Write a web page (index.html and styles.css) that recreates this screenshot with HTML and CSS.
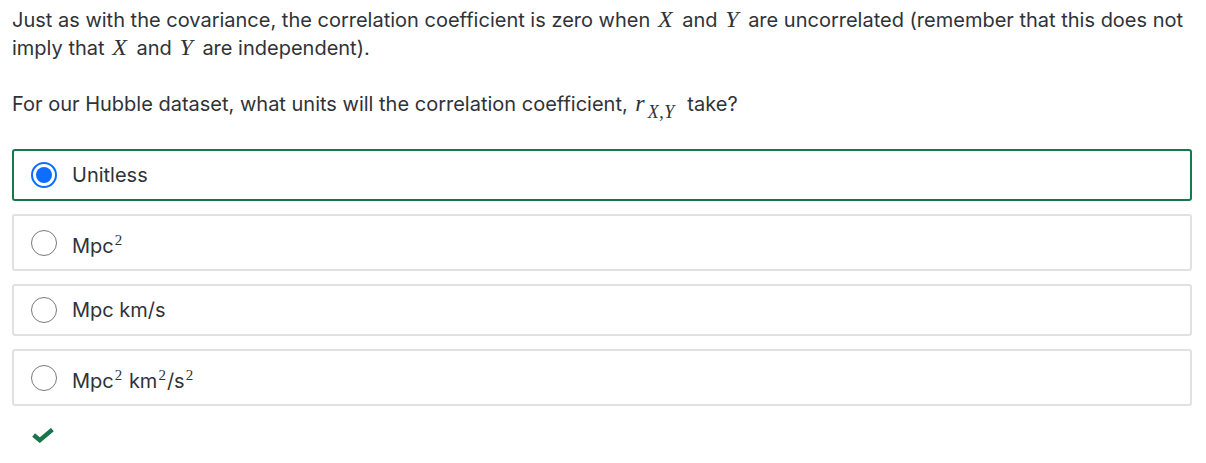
FILE: index.html
```html
<!DOCTYPE html>
<html>
<head>
<meta charset="utf-8">
<link rel="stylesheet" href="styles.css">
</head>
<body>
<div class="page">
  <p class="para">Just as with the covariance, the correlation coefficient is zero when <span class="m">X</span> and <span class="m">Y</span> are uncorrelated (remember that this does not imply that <span class="m">X</span> and <span class="m">Y</span> are independent).</p>
  <p class="para q">For our Hubble dataset, what units will the correlation coefficient, <span class="m">r</span><sub class="msub"><span class="mi">X</span><span class="comma">,</span><span class="mi">Y</span></sub> take?</p>
  <div class="options">
    <label class="opt selected"><span class="radio on"></span><span class="lbl">Unitless</span></label>
    <label class="opt"><span class="radio"></span><span class="lbl">Mpc<sup class="s">2</sup></span></label>
    <label class="opt"><span class="radio"></span><span class="lbl">Mpc km/s</span></label>
    <label class="opt"><span class="radio"></span><span class="lbl">Mpc<sup class="s">2</sup> km<sup class="s">2</sup>/s<sup class="s">2</sup></span></label>
  </div>
  <div class="result">
    <svg class="check" width="22" height="15" viewBox="0 0 22 15"><path d="M1.6 7 L7.8 12.2 L20.4 1.6" fill="none" stroke="#18774a" stroke-width="4.4" stroke-linejoin="miter"/></svg>
  </div>
</div>
</body>
</html>
```
FILE: styles.css
```css
html, body { margin: 0; padding: 0; background: #fff; }
body {
  font-family: Inter, "Noto Sans", sans-serif;
  font-size: 20px;
  color: #2f3338;
}
.page { padding: 6px 14px 0 12px; }
.para { margin: 0; line-height: 28px; }
.q { margin-top: 28px; }
.m {
  font-family: "Liberation Serif", "DejaVu Serif", serif;
  font-style: italic;
  font-size: 24px;
  line-height: 0;
  padding: 0 4px 0 2px;
}
.msub {
  font-family: "Liberation Serif", serif;
  font-style: italic;
  font-size: 18px;
  vertical-align: -7px;
  line-height: 0;
  margin-left: -1px;
  margin-right: 7px;
  letter-spacing: 0.5px;
}
.comma { font-style: normal; }
.options { margin-top: 31px; display: flex; flex-direction: column; gap: 13px; }
.opt {
  display: flex;
  align-items: center;
  border: 2px solid #e1e1e1;
  border-radius: 3px;
  padding: 11px 17px;
  min-height: 26px;
}
.opt.selected { border-color: #17784b; }
.radio {
  width: 26px; height: 26px;
  border: 1px solid #7a7a7a;
  border-radius: 50%;
  box-sizing: border-box;
  flex: none;
  position: relative;
}
.radio.on { border: 2px solid #0d6efd; }
.radio.on::after {
  content: "";
  position: absolute;
  left: 3px; top: 3px;
  width: 16px; height: 16px;
  border-radius: 50%;
  background: #0d6efd;
}
.lbl { margin-left: 15px; line-height: 24px; }
.s {
  font-family: "Liberation Serif", serif;
  font-size: 15px;
  vertical-align: 8px;
  line-height: 26px;
  margin-left: 1px;
  margin-right: 1px;
}
.result { padding: 22px 0 0 20px; }
.check { display: block; }
```
